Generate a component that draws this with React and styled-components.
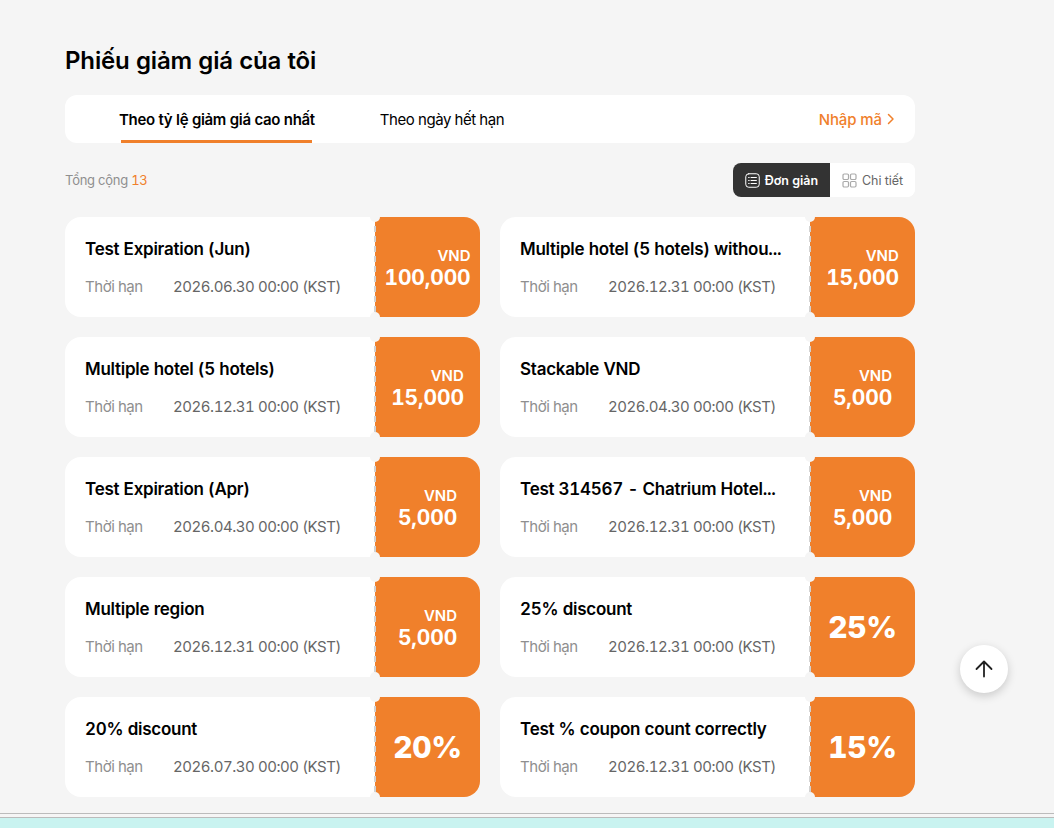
import React from 'react';
import styled, { createGlobalStyle } from 'styled-components';

const coupons = [
  { title: 'Test Expiration (Jun)', date: '2026.06.30 00:00 (KST)', amount: '100,000' },
  { title: 'Multiple hotel (5 hotels) withou...', date: '2026.12.31 00:00 (KST)', amount: '15,000' },
  { title: 'Multiple hotel (5 hotels)', date: '2026.12.31 00:00 (KST)', amount: '15,000' },
  { title: 'Stackable VND', date: '2026.04.30 00:00 (KST)', amount: '5,000' },
  { title: 'Test Expiration (Apr)', date: '2026.04.30 00:00 (KST)', amount: '5,000' },
  { title: 'Test 314567 - Chatrium Hotel...', date: '2026.12.31 00:00 (KST)', amount: '5,000' },
  { title: 'Multiple region', date: '2026.12.31 00:00 (KST)', amount: '5,000' },
  { title: '25% discount', date: '2026.12.31 00:00 (KST)', percent: '25%' },
  { title: '20% discount', date: '2026.07.30 00:00 (KST)', percent: '20%' },
  { title: 'Test % coupon count correctly', date: '2026.12.31 00:00 (KST)', percent: '15%' },
];

const App = () => {
  return (
    <Page>
      <GlobalStyle />
      <Container>
        <Title>Phiếu giảm giá của tôi</Title>
        <TabBar>
          <Tabs>
            <Tab active>Theo tỷ lệ giảm giá cao nhất</Tab>
            <Tab>Theo ngày hết hạn</Tab>
          </Tabs>
          <CodeLink>
            Nhập mã
            <svg width="8" height="12" viewBox="0 0 8 12" fill="none">
              <path d="M1.5 1.5L6 6L1.5 10.5" stroke="#f0802b" strokeWidth="1.5" strokeLinecap="round" strokeLinejoin="round" />
            </svg>
          </CodeLink>
        </TabBar>
        <Toolbar>
          <Total>
            Tổng cộng <b>13</b>
          </Total>
          <ViewSwitch>
            <ViewButton active>
              <svg width="15" height="15" viewBox="0 0 15 15" fill="none" stroke="#fff" strokeLinecap="round">
                <rect x="0.75" y="0.75" width="13.5" height="13.5" rx="3" />
                <path d="M3.6 4.5h.6M3.6 7.5h.6M3.6 10.5h.6M6 4.5h5.4M6 7.5h5.4M6 10.5h5.4" />
              </svg>
              Đơn giản
            </ViewButton>
            <ViewButton>
              <svg width="15" height="15" viewBox="0 0 15 15" fill="none" stroke="#aaa" strokeWidth="1.2">
                <rect x="1" y="1" width="5.5" height="5.5" rx="1.2" />
                <rect x="8.5" y="1" width="5.5" height="5.5" rx="1.2" />
                <rect x="1" y="8.5" width="5.5" height="5.5" rx="1.2" />
                <rect x="8.5" y="8.5" width="5.5" height="5.5" rx="1.2" />
              </svg>
              Chi tiết
            </ViewButton>
          </ViewSwitch>
        </Toolbar>
        <CouponGrid>
          {coupons.map((item, i) => (
            <Coupon key={i}>
              <CouponBody>
                <CouponTitle>{item.title}</CouponTitle>
                <CouponMeta>
                  <span>Thời hạn</span>
                  <time>{item.date}</time>
                </CouponMeta>
              </CouponBody>
              <CouponStub>
                {item.percent ? (
                  <Percent>{item.percent}</Percent>
                ) : (
                  <Amount>
                    <small>VND</small>
                    <strong>{item.amount}</strong>
                  </Amount>
                )}
              </CouponStub>
            </Coupon>
          ))}
        </CouponGrid>
      </Container>
      <Footer />
      <TopButton>
        <svg width="20" height="20" viewBox="0 0 20 20" fill="none">
          <path d="M10 17.5V2.5M2.5 10L10 2.5L17.5 10" stroke="#222" strokeWidth="1.8" strokeLinecap="round" strokeLinejoin="round" />
        </svg>
      </TopButton>
    </Page>
  );
};

const GlobalStyle = createGlobalStyle`
  html, body {
    margin: 0;
    height: 828px;
    overflow: hidden;
    background: #f5f5f5;
    font-family: Inter, "Noto Sans", sans-serif;
    font-variant-numeric: tabular-nums;
  }
  * {
    box-sizing: border-box;
  }
`;

const Page = styled.div`
  height: 828px;
  overflow: hidden;
`;

const Container = styled.main`
  width: 850px;
  margin-left: 65px;
  padding-top: 45px;
`;

const Title = styled.h1`
  margin: 0 0 18px;
  font-size: 24px;
  line-height: 32px;
  font-weight: 600;
  letter-spacing: -0.15px;
  color: #000;
`;

const TabBar = styled.div`
  height: 48px;
  background: #fff;
  border-radius: 12px;
  display: flex;
  justify-content: space-between;
  align-items: stretch;
  padding: 0 20px 0 54px;
`;

const Tabs = styled.div`
  display: flex;
  gap: 65px;
`;

const Tab = styled.div`
  position: relative;
  display: flex;
  align-items: center;
  font-size: 15px;
  letter-spacing: ${(p) => (p.active ? '-0.32px' : '-0.43px')};
  font-weight: ${(p) => (p.active ? 600 : 400)};
  color: #000;

  ${(p) =>
    p.active &&
    `
    &::after {
      content: '';
      position: absolute;
      left: 2px;
      right: 3px;
      bottom: 0;
      height: 3px;
      background: #f0802b;
    }
  `}
`;

const CodeLink = styled.div`
  display: flex;
  align-items: center;
  gap: 5px;
  font-size: 15px;
  letter-spacing: -0.1px;
  font-weight: 500;
  color: #f0802b;
`;

const Toolbar = styled.div`
  display: flex;
  justify-content: space-between;
  align-items: center;
  margin: 20px 0;
  height: 34px;
`;

const Total = styled.div`
  font-size: 13px;
  letter-spacing: -0.25px;
  color: #8f8f8f;

  b {
    font-weight: 400;
    color: #f0802b;
  }
`;

const ViewSwitch = styled.div`
  display: flex;
  height: 34px;
  border-radius: 8px;
  overflow: hidden;
  background: #fff;
`;

const ViewButton = styled.div`
  display: flex;
  align-items: center;
  gap: 5px;
  padding: 0 12px;
  font-size: 12.5px;
  letter-spacing: -0.05px;
  font-weight: ${(p) => (p.active ? 600 : 400)};
  background: ${(p) => (p.active ? '#333' : '#fff')};
  color: ${(p) => (p.active ? '#fff' : '#666')};
`;

const CouponGrid = styled.div`
  display: grid;
  grid-template-columns: 415px 415px;
  gap: 20px;
`;

const Coupon = styled.div`
  display: flex;
  height: 100px;
  border-radius: 16px;
  overflow: hidden;
`;

const CouponBody = styled.div`
  width: 309px;
  flex: none;
  background: #fff;
  padding: 20px 20px 0 20px;
  min-width: 0;
`;

const CouponTitle = styled.div`
  font-size: 17px;
  line-height: 24px;
  font-weight: 600;
  letter-spacing: -0.25px;
  color: #000;
  white-space: nowrap;
`;

const CouponMeta = styled.div`
  display: flex;
  margin-top: 14px;
  font-size: 15px;
  line-height: 24px;
  letter-spacing: -0.45px;

  span {
    width: 88px;
    flex: none;
    color: #8f8f8f;
  }

  time {
    color: #666;
  }
`;

// the tear line is painted as a 2px strip so the dash and gap lengths can be set
const CouponStub = styled.div`
  position: relative;
  flex: 1;
  padding-left: 1px;
  background:
    repeating-linear-gradient(#d2d2d2 0 6px, transparent 6px 10px) 0 9px / 2px 100% no-repeat,
    linear-gradient(#fff, #fff) 0 0 / 1px 100% no-repeat,
    #f0802b;
  display: flex;
  align-items: center;
  justify-content: center;

  &::before,
  &::after {
    content: '';
    position: absolute;
    left: -4px;
    width: 10px;
    height: 10px;
    border-radius: 50%;
    background: #f5f5f5;
  }

  &::before {
    top: -5px;
  }

  &::after {
    bottom: -5px;
  }
`;

const Amount = styled.div`
  display: flex;
  flex-direction: column;
  align-items: flex-end;
  color: #fff;

  small {
    font-size: 15px;
    line-height: 20px;
    font-weight: 600;
  }

  strong {
    font-size: 21px;
    line-height: 23px;
    font-weight: 700;
    letter-spacing: -0.15px;
  }
`;

const Percent = styled.div`
  font-size: 30px;
  font-weight: 800;
  letter-spacing: -0.3px;
  color: #fff;
`;

const Footer = styled.footer`
  margin-top: 16px;
  height: 100px;
  border-top: 1px solid #bbb;
  padding-top: 3px;

  &::after {
    content: '';
    display: block;
    height: 100%;
    background: #c9f3f0;
    border-top: 1px solid #bbb;
  }
`;

const TopButton = styled.button`
  position: fixed;
  left: 960px;
  top: 645px;
  width: 48px;
  height: 48px;
  border: 0;
  padding: 0;
  border-radius: 50%;
  background: #fff;
  box-shadow: 0 3px 10px rgba(0, 0, 0, 0.18);
  display: flex;
  align-items: center;
  justify-content: center;
`;

export default App;
